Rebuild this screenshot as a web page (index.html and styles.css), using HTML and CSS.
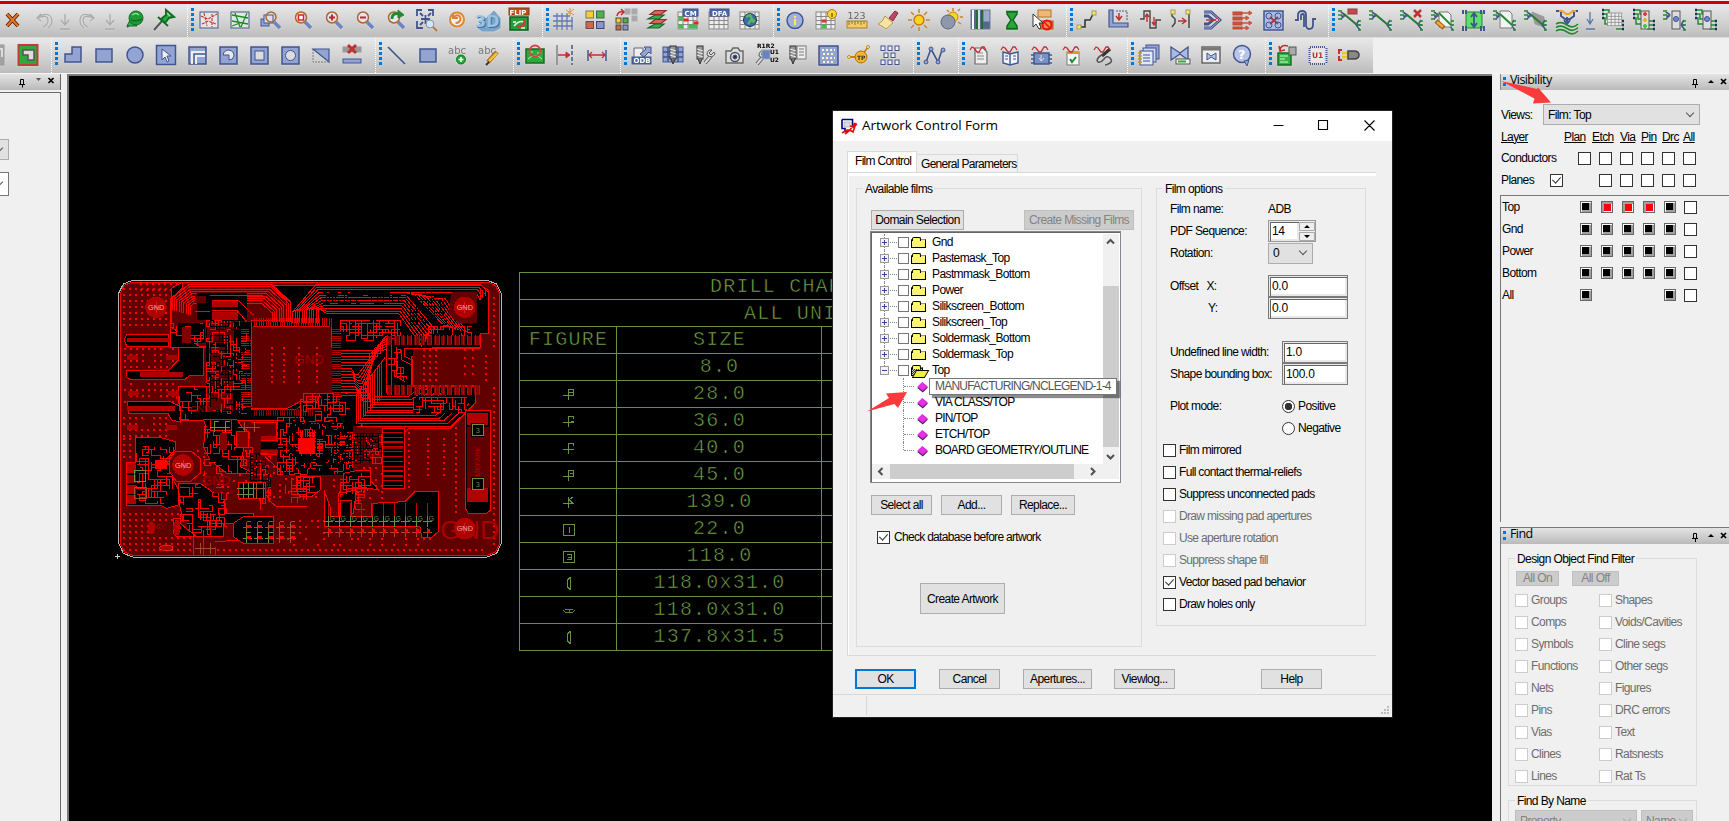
FILE: index.html
```html
<!DOCTYPE html>
<html lang="en">
<head>
<meta charset="utf-8">
<title>Artwork Control Form</title>
<link rel="stylesheet" href="styles.css">
</head>
<body>
<div class="app">
  <div class="topline"></div>
  <div class="bar" data-icons="close:23 gap:9 undo:22 down:22 redo:23 down:22 ball:28 pin:30.5 | unrats rats zfit zbox zin zout zprev zworld rotate three flip | grid colors shift layers cm dfa world | info cns measure brush sun shadow stripes hour pick | conn slide delay space fan bus spread tune | r1 r2 r3 r4 r5 r6 r7 r8 downb:15 r9 r10 r11 r12"></div>
  <div class="bar bar2" data-icons="cut:12.5 shape | poly rect circ sel lshape pie sqv cirv tri del | line rect abcadd abcedit | pcbv dimL dim | odb drillc drillt camera rename drilll matrix tp chips | netn | wdoc wbook wchip wpad wprobe | pages valve window help | swap uone plug"></div>
  <main class="main">
    <aside class="left">
      <div class="head"><svg width="60" height="16" viewBox="0 0 60 16"><path d="M20.500 5.500h3v5h-3zM19 10.500h6M22.500 10.500v3" fill="none" stroke="#000"/><path d="M36 4h5l-2.500 3z" fill="#555"/><path d="M48.500 4l5 5M53.500 4l-5 5" stroke="#000" stroke-width="1.700"/></svg></div>
      <div class="leftbody"><div class="combo c1"><span class="chev"></span></div><div class="combo c2"><span class="chev"></span></div></div>
    </aside>
    <section class="canvas">
      <svg class="pcb" viewBox="0 0 1260 930" id="pcb"></svg>
      <div class="drill">
        <div class="dr wide t1">DRILL CHART</div>
        <div class="dr wide t2">ALL UNITS</div>
        <div class="dr"><span>FIGURE</span><span>SIZE</span></div>
        <div class="dr"><span></span><span>8.0</span></div>
        <div class="dr"><span><svg viewBox="0 0 12 13"><path d="M0 7.500h11M5.500 1v11M6 1.500h4v6M6 4.500h4"/></svg></span><span>28.0</span></div>
        <div class="dr"><span><svg viewBox="0 0 12 13"><path d="M0 7.500h11M5.500 1v11M6 1.500h4v2M8 6.500h3"/></svg></span><span>36.0</span></div>
        <div class="dr"><span><svg viewBox="0 0 12 13"><path d="M0 7.500h11M5.500 1v11M6 1.500h4v2"/></svg></span><span>40.0</span></div>
        <div class="dr"><span><svg viewBox="0 0 12 13"><path d="M0 7.500h11M5.500 1v11M6 1.500h4v2M7 4.500h3v3"/></svg></span><span>45.0</span></div>
        <div class="dr"><span><svg viewBox="0 0 12 13"><path d="M0 7.500h11M5.500 1v11M10 1l-4 3 4 3"/></svg></span><span>139.0</span></div>
        <div class="dr"><span><svg viewBox="0 0 12 13"><path d="M.5 1.500h11v11H.5zM6.500 4v6"/></svg></span><span>22.0</span></div>
        <div class="dr"><span><svg viewBox="0 0 12 13"><path d="M.5 1.500h11v11H.5zM4 4.500h4v5H4M5 7h3"/></svg></span><span>118.0</span></div>
        <div class="dr"><span><svg viewBox="0 0 12 13"><path d="M7.500 0v13M7 .5L4.500 3v7L7 12.500"/></svg></span><span>118.0x31.0</span></div>
        <div class="dr"><span><svg viewBox="0 0 13 13"><path d="M2 5.500h9l1.500 1.500-1.500 1.500H2L.5 7zM6.500 6v2"/></svg></span><span>118.0x31.0</span></div>
        <div class="dr"><span><svg viewBox="0 0 12 13"><path d="M7.500 0v13M7 .5L4.500 3v7L7 12.500"/></svg></span><span>137.8x31.5</span></div>
      </div>
    </section>
    <aside class="right">
      <div class="head"><span class="ticks"></span><b>Visibility</b><svg class="hi" width="46" height="16" viewBox="0 0 46 16"><path d="M8.500 5.500h3v5h-3zM7 10.500h6M10.500 10v4" fill="none" stroke="#000"/><path d="M23 9h6l-3-3z"/><path d="M36 5l5 5M41 5l-5 5" stroke="#000" stroke-width="1.700"/></svg></div>
      <div class="views"><label>Views:</label><div class="combo big">Film: Top<span class="chev"></span></div></div>
      <div class="lyr hd"><u>Layer</u><u>Plan</u><u>Etch</u><u>Via</u><u>Pin</u><u>Drc</u><u>All</u></div>
      <div class="vrow"><span>Conductors</span><i class="cb"></i><i class="cb"></i><i class="cb"></i><i class="cb"></i><i class="cb"></i><i class="cb"></i></div>
      <div class="vrow"><span class="pl">Planes<i class="cb on"></i></span><i></i><i class="cb"></i><i class="cb"></i><i class="cb"></i><i class="cb"></i><i class="cb"></i></div>
      <div class="layers">
        <div class="vrow"><span>Top</span><i class="sw"></i><i class="sw red"></i><i class="sw red"></i><i class="sw red"></i><i class="sw"></i><i class="cb"></i></div>
        <div class="vrow"><span>Gnd</span><i class="sw"></i><i class="sw"></i><i class="sw"></i><i class="sw"></i><i class="sw"></i><i class="cb"></i></div>
        <div class="vrow"><span>Power</span><i class="sw"></i><i class="sw"></i><i class="sw"></i><i class="sw"></i><i class="sw"></i><i class="cb"></i></div>
        <div class="vrow"><span>Bottom</span><i class="sw"></i><i class="sw"></i><i class="sw"></i><i class="sw"></i><i class="sw"></i><i class="cb"></i></div>
        <div class="vrow"><span>All</span><i class="sw"></i><i></i><i></i><i></i><i class="sw"></i><i class="cb"></i></div>
      </div>
      <div class="find">
        <div class="head"><span class="ticks"></span><b>Find</b><svg class="hi" width="46" height="16" viewBox="0 0 46 16"><path d="M8.500 5.500h3v5h-3zM7 10.500h6M10.500 10v4" fill="none" stroke="#000"/><path d="M23 9h6l-3-3z"/><path d="M36 5l5 5M41 5l-5 5" stroke="#000" stroke-width="1.700"/></svg></div>
        <div class="grp ff"><span class="cap">Design Object Find Filter</span>
          <div class="ab"><button class="dis a1">All On</button><button class="dis a2">All Off</button></div>
          <div class="fgrid">
            <label><i class="cb d"></i>Groups</label><label><i class="cb d"></i>Shapes</label>
            <label><i class="cb d"></i>Comps</label><label><i class="cb d"></i>Voids/Cavities</label>
            <label><i class="cb d"></i>Symbols</label><label><i class="cb d"></i>Cline segs</label>
            <label><i class="cb d"></i>Functions</label><label><i class="cb d"></i>Other segs</label>
            <label><i class="cb d"></i>Nets</label><label><i class="cb d"></i>Figures</label>
            <label><i class="cb d"></i>Pins</label><label><i class="cb d"></i>DRC errors</label>
            <label><i class="cb d"></i>Vias</label><label><i class="cb d"></i>Text</label>
            <label><i class="cb d"></i>Clines</label><label><i class="cb d"></i>Ratsnests</label>
            <label><i class="cb d"></i>Lines</label><label><i class="cb d"></i>Rat Ts</label>
          </div>
        </div>
        <div class="grp fn"><span class="cap">Find By Name</span>
          <div class="nm"><div class="combo dc p">Property<span class="chev"></span></div><div class="combo dc n">Name<span class="chev"></span></div></div>
        </div>
      </div>
    </aside>
  </main>

  <div class="dialog">
    <header class="title">
      <svg width="17" height="17" viewBox="0 0 17 17"><path d="M1 1.500h10.500V8M1 1.500v9h3v3h3" fill="#fff" stroke="#00008b" stroke-width="1.600"/><path d="M3 4h6v5H3z" fill="#dde" stroke="#aab" stroke-width=".8"/><path d="M1 15l5-3h3l5-7M4 16l5-4 3 2 3-9M9 8l3 1 4-3" fill="none" stroke="#e01010" stroke-width="1.700"/></svg>
      <b>Artwork Control Form</b>
      <svg class="wb" width="104" height="14" viewBox="0 0 104 14"><path d="M.5 6.500h10M45.500 1.500h9v9h-9zM91.500 1.500l10 10M101.500 1.500l-10 10" fill="none" stroke="#000" stroke-width="1.100"/></svg>
    </header>
    <div class="tabs"><div class="tab act">Film Control</div><div class="tab">General Parameters</div></div>
    <div class="page">
      <div class="grp films"><span class="cap">Available films</span>
        <div class="brow"><button class="w93">Domain Selection</button><button class="dis w110">Create Missing Films</button></div>
        <div class="tree">
          <div class="items">
            <div class="it"><em></em><i></i><s></s>Gnd</div>
            <div class="it"><em></em><i></i><s></s>Pastemask_Top</div>
            <div class="it"><em></em><i></i><s></s>Pastmmask_Bottom</div>
            <div class="it"><em></em><i></i><s></s>Power</div>
            <div class="it"><em></em><i></i><s></s>Silikscreen_Bottom</div>
            <div class="it"><em></em><i></i><s></s>Silikscreen_Top</div>
            <div class="it"><em></em><i></i><s></s>Soldermask_Bottom</div>
            <div class="it"><em></em><i></i><s></s>Soldermask_Top</div>
            <div class="it open"><em class="minus"></em><i></i><s class="o"></s>Top</div>
            <div class="ch"><q></q><span class="tip">MANUFACTURING/NCLEGEND-1-4</span></div>
            <div class="ch"><q></q>VIA CLASS/TOP</div>
            <div class="ch"><q></q>PIN/TOP</div>
            <div class="ch"><q></q>ETCH/TOP</div>
            <div class="ch last"><q></q>BOARD GEOMETRY/OUTLINE</div>
          </div>
          <div class="vs"><svg width="15" height="15" viewBox="0 0 15 15"><path d="M4 9.500l3.500-3.500L11 9.500"/></svg><div class="vt"></div><svg width="15" height="15" viewBox="0 0 15 15"><path d="M4 6l3.500 3.500L11 6"/></svg></div>
          <div class="hs"><svg width="18" height="15" viewBox="0 0 18 15"><path d="M10.500 4L7 7.500l3.500 3.500"/></svg><div class="ht"></div><svg width="38" height="15" viewBox="0 0 38 15"><path d="M17 4l3.500 3.500L17 11"/></svg></div>
        </div>
        <div class="brow b2"><button class="w61">Select all</button><button class="w61">Add...</button><button class="w64">Replace...</button></div>
        <label class="chk"><i class="cb on"></i>Check database before artwork</label>
        <button class="art">Create Artwork</button>
      </div>
      <div class="grp opts"><span class="cap">Film options</span>
        <div class="or"><span>Film name:</span><span>ADB</span></div>
        <div class="or"><span>PDF Sequence:</span><div class="spin"><div class="inp">14</div><svg width="16" height="19" viewBox="0 0 16 19"><path d="M.5.500h15v8H.5zM.5 10.500h15v8H.5z" fill="#eee" stroke="#aaa"/><path d="M5 6h6L8 3zM5 13h6l-3 3z"/></svg></div></div>
        <div class="or"><span>Rotation:</span><div class="combo rot">0<span class="chev"></span></div></div>
        <div class="or g11"><span>Offset&nbsp;&nbsp; X:</span><div class="inp i80">0.0</div></div>
        <div class="or"><span class="y">Y:</span><div class="inp i80">0.0</div></div>
        <div class="or g22 r2"><span>Undefined line width:</span><div class="inp">1.0</div></div>
        <div class="or r2"><span>Shape bounding box:</span><div class="inp">100.0</div></div>
        <div class="or g10 r2"><span>Plot mode:</span><label><i class="rd on"></i>Positive</label></div>
        <div class="or r2"><span></span><label><i class="rd"></i>Negative</label></div>
        <label class="chk"><i class="cb"></i>Film mirrored</label>
        <label class="chk"><i class="cb"></i>Full contact thermal-reliefs</label>
        <label class="chk"><i class="cb"></i>Suppress unconnected pads</label>
        <label class="chk off"><i class="cb d"></i>Draw missing pad apertures</label>
        <label class="chk off"><i class="cb d"></i>Use aperture rotation</label>
        <label class="chk off"><i class="cb d"></i>Suppress shape fill</label>
        <label class="chk"><i class="cb on"></i>Vector based pad behavior</label>
        <label class="chk"><i class="cb"></i>Draw holes only</label>
      </div>
    </div>
    <div class="foot"><button class="ok w61">OK</button><button class="w61">Cancel</button><button class="w69">Apertures...</button><button class="w61">Viewlog...</button><button class="w61 help">Help</button></div>
    <div class="status"><svg width="9" height="9" viewBox="0 0 9 9"><path d="M6 0h2v2H6zM3 3h2v2H3zM6 3h2v2H6zM0 6h2v2H0zM3 6h2v2H3zM6 6h2v2H6z" fill="#bbb"/></svg></div>
  </div>
  <svg class="ar a-tree" width="41" height="23" viewBox="0 0 41 23"><path d="M0 21.500L22 8 19 3.500 40 2 31 18l-3.500-4z" fill="#fb3b3b"/></svg>
  <svg class="ar a-view" width="52" height="24" viewBox="0 0 52 24"><path d="M0 0l36 8 1-1.500L50 21.500 32 22.500l1.500-5z" fill="#fb3b3b"/></svg>
</div>
<script src="app.js"></script>
</body>
</html>
```

FILE: styles.css
```css
* { box-sizing: border-box; }
body { margin: 0; background: #f0f0f0; font: 12px/16px "Liberation Sans", Arial, sans-serif; letter-spacing: -.6px; color: #000; }
i, em { font-style: normal; }
.app { position: relative; width: 1729px; height: 821px; overflow: hidden; display: flex; flex-direction: column; }
.topline { height: 4px; flex: none; border-top: 1px solid #f0f0f0; background: #cb0000; }
.bar { height: 34px; flex: none; display: flex; background: linear-gradient(#e8e8e8, #d4d4d4 50%, #bcbcbc); border-bottom: 1px solid #dcdcdc; }
.bar2 { height: 35px; width: 1373px; border-bottom: 0; }
.bar .cell { flex: none; display: flex; justify-content: center; align-items: center; height: 32px; }
.bar2 .cell { height: 34px; }
.bar .cell svg { flex: none; width: 24px; height: 24px; overflow: visible; filter: drop-shadow(0 0 1px #ddd); }
.sep { flex: none; width: 14px; display: flex; justify-content: flex-end; gap: 3px; }
.sep::before { content: ""; border-left: 1px dotted #fff; }
.sep::after { content: ""; width: 3px; height: 24px; margin: 4px 0 0 0; background: repeating-linear-gradient(#0078d7 0 3px, transparent 3px 5px); }
.main { flex: 1; display: flex; min-height: 0; border-top: 1px solid #f6f6f6; }
.left { width: 67px; display: flex; flex-direction: column; }
.head { height: 16px; flex: none; display: flex; align-items: center; background: linear-gradient(#e4e4e4, #bababa); }
.left .head { width: 61px; border-right: 1px solid #666; }
.leftbody { flex: 1; width: 61px; margin-top: 2px; border: solid #6a6a6a; border-width: 1px 1px 0 0; display: flex; flex-direction: column; }
.combo { position: relative; display: flex; align-items: center; border: 1px solid #adadad; background: #e1e1e1; padding-left: 4px; }
.chev { position: absolute; right: 6px; top: 50%; width: 6px; height: 6px; margin-top: -5px; border: solid #555; border-width: 0 1px 1px 0; transform: rotate(45deg); }
.c1 { width: 9px; height: 21px; margin-top: 46px; }
.c2 { width: 9px; height: 24px; margin-top: 12px; background: #fff; border-color: #777; }
.c1, .c2 { border-left: 0; }
.canvas { flex: 1; position: relative; overflow: hidden; background: #000; border: solid #7a7a7a; border-width: 2px 0 0 2px; }
.pcb { position: absolute; left: 31px; top: 184px; width: 420px; height: 310px; shape-rendering: crispEdges; }
.drill { position: absolute; left: 450px; top: 196px; width: 400px; border: solid #679040; border-width: 1px 0 0 1px; font: 20px/28px "Liberation Mono", monospace; letter-spacing: 1.200px; color: #77a948; -webkit-text-stroke: .6px #000; }
.dr { height: 27px; border-bottom: 1px solid #679040; display: grid; grid-template-columns: 97px 205px 1fr; white-space: nowrap; }
.dr span { border-right: 1px solid #679040; display: flex; align-items: center; justify-content: center; height: 26px; padding-left: 1px; }
.dr svg { width: 12px; height: 13px; fill: none; stroke: #679040; shape-rendering: crispEdges; }
.t1 { padding-left: 190px; } .t2 { padding-left: 224px; }
.dr.wide { display: block; }
.right { width: 237px; padding-left: 8px; overflow: hidden; display: flex; flex-direction: column; }
.right > * { flex: none; }
.head b { font: 12.500px/16px "Open Sans", sans-serif; letter-spacing: -.6px; margin: -4px 0 0 4px; }
.ticks { width: 3px; height: 9px; margin: -2px 0 0 2px; background: linear-gradient(#0078d7 0 3px, transparent 3px 6px, #0078d7 6px 9px); }
.hi { margin-left: auto; margin-right: -2px; }
.right > .head { width: 229px; border-left: 1px solid #888; }
.views { display: flex; align-items: center; margin-top: 14px; height: 21px; padding-left: 1px; }
.big { width: 157px; height: 21px; margin-left: auto; margin-right: 29px; }
.lyr, .vrow { display: grid; align-items: center; height: 22px; padding-left: 1px; }
.lyr { grid-template-columns: 63px 28px 28px 21px 21px 21px 21px; margin-top: 1px; height: 21px; }
.vrow { grid-template-columns: 73px repeat(6, 21px); justify-items: center; height: 22px; }
.vrow > span { justify-self: start; width: 73px; }
.pl { display: flex; align-items: center; } .pl .cb { margin-left: 16px; }
.cb { width: 13px; height: 13px; flex: none; border: 1px solid #333; background: #fff; display: inline-block; position: relative; }
.cb.d { border-color: #ccc; }
.cb.on::after { content: ""; position: absolute; left: 3px; top: 0; width: 4px; height: 7px; border: solid #333; border-width: 0 1.300px 1.300px 0; transform: rotate(42deg); }
.layers { height: 327px; margin-top: 4px; border: solid #777; border-width: 1px 0 0 1px; }
.layers .vrow { grid-template-columns: 73px repeat(6, 21px); }
.sw { width: 12px; height: 12px; background: #000; border: 1px solid #666; box-shadow: inset 1px 1px #fff, inset -2px -2px #a0a0a0; }
.sw.red { background: #f00; box-shadow: inset 2px 2px #a0a0a0, inset -1px -1px #fff; }
.find { margin-top: 5px; height: 300px; border: solid #777; border-width: 1px 0 0 1px; }
.grp { position: relative; border: 1px solid #dcdcdc; }
.cap { position: absolute; left: 6px; top: -8px; padding: 0 2px; background: #f0f0f0; white-space: nowrap; }
.ff { width: 189px; height: 228px; margin: 14px 0 0 7px; color: #6d6d6d; }
.ff .cap, .fn .cap { color: #000; }
button { font: inherit; letter-spacing: inherit; color: #000; height: 20px; padding: 0; border: 1px solid #adadad; background: #e1e1e1; white-space: nowrap; }
button.dis { background: #ccc; border-color: #bfbfbf; color: #838383; }
.ab { display: flex; gap: 13px; padding: 12px 0 0 7px; }
.ab button { height: 15px; line-height: 13px; } .a1 { width: 43px; } .a2 { width: 47px; }
.fgrid { display: grid; grid-template-columns: 84px 100px; grid-auto-rows: 22px; margin: 3px 0 0 6px; }
.fgrid label, .chk, .or label { display: flex; align-items: center; gap: 3px; white-space: nowrap; }
.fn { width: 189px; height: 60px; margin: 14px 0 0 7px; }
.nm { display: flex; gap: 4px; padding: 9px 0 0 6px; }
.dc { height: 21px; background: #ccc; color: #838383; border-color: #bfbfbf; } .dc .chev { border-color: #aaa; } .p { width: 122px; } .n { width: 52px; }

.dialog { position: absolute; left: 833px; top: 111px; width: 559px; height: 606px; background: #f0f0f0; outline: 1px solid #222; display: flex; flex-direction: column; }
.title { height: 30px; flex: none; background: #fff; display: flex; align-items: center; padding-left: 8px; }
.title b { font: 13.500px/18px "Open Sans", sans-serif; letter-spacing: -.05px; margin: -2px 0 0 4px; }
.wb { margin-left: auto; margin-right: 15px; }
.tabs { display: flex; height: 31px; padding: 11px 0 0 14px; align-items: flex-end; }
.tab { height: 18px; width: 101px; border: 1px solid #d9d9d9; border-bottom: 0; border-left: 0; padding: 1px 4px; white-space: nowrap; letter-spacing: -.7px; }
.tab.act { height: 21px; width: 70px; background: #fff; border-left: 1px solid #d9d9d9; padding: 1px 7px; }
.page { width: 529px; height: 484px; margin-left: 14px; border: 1px solid #d9d9d9; border-right: 0; box-shadow: inset 1px 3px #fff; display: flex; padding: 15px 0 0 8px; gap: 14px; }
.films { width: 286px; height: 459px; padding: 21px 0 0 14px; }
.brow { display: flex; gap: 9px; }
.w93 { width: 93px; } .w110 { width: 110px; margin-left: 51px; } .w61 { width: 61px; } .w64 { width: 64px; } .w69 { width: 69px; }
.tree { width: 251px; height: 252px; margin: 1px 0 0 -1px; background: #fff; border: 1px solid #828790; box-shadow: inset 1px 1px #666; display: grid; grid-template: 230px 15px / 231px 16px; padding: 2px 0 0 1px; }
.items { position: relative; }
.it, .ch { height: 16px; display: flex; align-items: center; white-space: nowrap; }
.it { padding-left: 8px; position: relative; }
.it::before { content: ""; position: absolute; left: 12px; top: 0; height: 16px; border-left: 1px dotted #888; }
.it.open::before { height: 8px; }
.it em { width: 9px; height: 9px; position: relative; border: 1px solid #999; background: linear-gradient(#2b4b9b, #2b4b9b) center/5px 1px no-repeat, linear-gradient(#2b4b9b, #2b4b9b) center/1px 5px no-repeat, #f4f4f4; }
.it em.minus { background: linear-gradient(#2b4b9b, #2b4b9b) center/5px 1px no-repeat, #f4f4f4; }
.it em::after { content: ""; position: absolute; left: 9px; top: 3px; width: 7px; border-top: 1px dotted #888; }
.it i { width: 11px; height: 11px; border: 1px solid #777; margin-left: 9px; background: #fff; }
.it s { width: 15px; height: 9px; margin: 2px 6px 0 2px; background: repeating-conic-gradient(#ffff28 0 25%, #fff47e 0 50%) 0 0/2px 2px; border: 1px solid #000; border-top-color: #aa0; position: relative; text-decoration: none; }
.it s::before { content: ""; position: absolute; left: 0; top: -3px; width: 7px; height: 3px; border: 1px solid #000; border-bottom: 0; border-radius: 2px 2px 0 0; background: #ff5; }
.it s.o { width: 12px; margin-right: 9px; background: repeating-conic-gradient(#333 0 25%, #ccc 0 50%) 0 0/2px 2px; }
.it s.o::after { content: ""; position: absolute; left: 2px; top: 2px; width: 11px; height: 6px; background: #ee4; border: 1px solid #000; transform: skewX(-30deg); }
.ch { padding-left: 47px; position: relative; }
.ch::before { content: ""; position: absolute; left: 31px; top: 0; height: 16px; border-left: 1px dotted #888; }
.ch.last::before { height: 8px; }
.ch::after { content: ""; position: absolute; left: 32px; top: 8px; width: 10px; border-top: 1px dotted #888; }
.ch q { quotes: none; width: 7px; height: 7px; margin-right: 9px; background: #e62ee6; box-shadow: 1px 1px #402040; transform: rotate(38deg) skew(-8deg); }
.ch { letter-spacing: -.75px; }
.tip { position: absolute; left: 57px; top: 0; z-index: 3; width: 188px; height: 17px; line-height: 15px; padding-left: 5px; background: #fff; border: 1px solid #767676; color: #555; box-shadow: 3px 3px 1px rgba(0,0,0,.45); letter-spacing: -.78px; }
.vs, .hs { background: #f0f0f0; display: flex; }
.vs { flex-direction: column; }
.vs svg, .hs svg { fill: none; stroke: #505050; stroke-width: 2; }
.vt { height: 161px; margin: 37px 0 2px; background: #cdcdcd; }
.hs { grid-column: 1 / 3; } .ht { width: 184px; background: #cdcdcd; }
.b2 { margin-top: 12px; }
.chk { height: 22px; }
.films .chk { margin: 11px 0 0 6px; gap: 4px; letter-spacing: -.7px; }
.art { width: 85px; height: 31px; margin: 35px 0 0 49px; }
.opts { width: 210px; height: 438px; padding: 9px 0 0 6px; }
.opts .chk.off { color: #6d6d6d; }
.opts .chk { letter-spacing: -.66px; }
.or { display: grid; grid-template-columns: 98px auto; height: 22px; align-items: center; justify-content: start; padding-left: 7px; white-space: nowrap; }
.or.r2 { grid-template-columns: 112px 66px; }
.g11 { margin-top: 11px; } .g22 { margin-top: 22px; } .g10 { margin-top: 10px; }
.y { padding-left: 38px; }
.inp { height: 22px; border: 1px solid #7a7a7a; background: #fff; box-shadow: inset 1px 1px #e8e8e8, inset 2px 2px #666, inset -2px -2px #e8e8e8; padding: 2px 0 0 3px; letter-spacing: -.3px; }
.i80 { width: 80px; }
.spin { display: flex; align-items: center; width: 48px; height: 22px; border: 1px solid #999; }
.spin .inp { width: 30px; height: 20px; border: 0; padding-left: 3px; padding-top: 2px; }
.rot { width: 45px; height: 21px; }
.rd { width: 13px; height: 13px; border: 1px solid #333; border-radius: 50%; background: #fff; }
.rd.on { background: radial-gradient(#333 0 3.500px, #fff 4px); }
.foot { display: flex; gap: 23px; padding: 13px 0 0 22px; }
.ok { border: 2px solid #0078d7; }
.foot .help { margin-left: 63px; }
.foot button:nth-child(4) { margin-left: -1px; }
.status { margin-top: auto; height: 23px; border-top: 1px solid #d7d7d7; display: flex; justify-content: flex-end; align-items: flex-end; padding: 2px; }
.status::before { content: ""; width: 1px; height: 19px; background: #d7d7d7; margin-left: 31px; margin-right: auto; }
.ar { position: absolute; }
.a-tree { left: 867px; top: 390px; }
.a-view { left: 1501px; top: 81px; }
```

FILE: app.js
```js
// ---- Toolbar icons, drawn in a 24 x 24 box ----
const B = '#93a3d3', S = '#40558c', G = '#1f8a2e', R = '#c22f2f';
const p = (d, s = S, w = 1.5, f = 'none') => `<path d="${d}" stroke="${s}" stroke-width="${w}" fill="${f}"/>`;
const r = (x, y, w, h, f = B, s = S, sw = 1) => `<rect x="${x}" y="${y}" width="${w}" height="${h}" fill="${f}" stroke="${s}" stroke-width="${sw}"/>`;
const c = (x, y, q, f = B, s = S, sw = 1) => `<circle cx="${x}" cy="${y}" r="${q}" fill="${f}" stroke="${s}" stroke-width="${sw}"/>`;
const t = (x, y, s, z, f, b = 400) => `<text x="${x}" y="${y}" font-size="${z}" fill="${f}" font-weight="${b}" font-family="DejaVu Sans" letter-spacing="0">${s}</text>`;
const mag = p('M15 14l6 6', '#6d83c4', 3.6) + c(11, 9.500, 5.500, '#e3e6ee', '#a8672c', 1.500);
const table = r(2, 4, 19, 17, '#eee', '#888') + p('M2 8.500h19M2 12.500h19M2 16.500h19M7 4v17M12 4v17M17 4v17', '#888', 1);
const wave = p('M2 7l2-3 2 1 3 4 2 0 3-5 2 0 2 3', R, 1.300);
const pin4 = p('M3 4l4 3M3 8h4M3 11l4-4M22 22l-4-5M22 17h-4M21 12l-3 5', S, 1.600) + p('M0 3h4M0 7h4M0 11h4M20 13h3M20 17h3M20 22h3', G, 1.500);
const diag = pin4 + p('M6 6l13 11', '#2b7a35', 2.2);
const drill = r(5, 3, 6, 13, '#999', '#333') + p('M5 6l6 2M5 9l6 2M5 12l6 2', '#eee', 1) + p('M6 16l2 5 2-5', '#333', 1, '#777');
const wrench = p('M13 20l6-7', '#555', 4) + p('M13 20l6-7', '#ddd', 2) + p('M22 9l-3 3-2-2 3-3q-5-1-5 5 5 4 8-1z', '#555', 1, '#ddd');
const pcb = r(3, 6, 18, 14, '#2eaa3c', '#176b20', 1.500) + p('M5 16l4-3h6l4 3M6 9h4M14 10h4', '#bdf2a9', 1);
const ch4 = p('M2 2h6v4h3M2 6h4v5h5M2 10h2v6h7', G, 1.500) + p('M15 13h7M15 17h7M15 21h7', G, 1.500) + p('M1 2h2M1 6h2M1 10h2M21 13h2M21 17h2M21 21h2', '#135', 2.500);
const bolt = r(9, 3, 8, 18, '#ddd', '#555');
const I = {
  gap: '', close: p('M7 6l11 12M18 6L7 18', '#5a2208', 4) + p('M7 6l11 12M18 6L7 18', '#e2742a', 2.2),
  undo: p('M10 6l-4 4 4 3M6 10q11-4 11 2 0 5-5 7M8 8q12-5 13 5 0 4-4 7', '#aaa', 1.200), redo: p('M14 6l4 4-4 3M18 10Q7 6 7 12q0 5 5 7M16 8Q4 3 4 13q0 4 4 7', '#aaa', 1.200),
  down: p('M12 6v10M8 12l4 5 4-5M7 21h10', '#aaa', 1.300), downb: p('M12 4v11M9 11l3 5 3-5M8 21h9', '#5874a8', 1.300),
  ball: p('M4 19l6-5', '#444', 2) + p('M4 18l4-8 6 8z', '#0c6a20', 1, '#3aa850') + c(13, 10, 7, '#1e9a36', '#0c6a20') + p('M9 7q4-3 7 0', '#8ae08c', 1.500) + p('M8 12q6 2 11-1', '#0c6a20', 1.300),
  pin: p('M2 22l8-9', '#555', 2) + p('M6 9l10 9M14 2l8 7-5 1-4 5-4-4 5-4z', '#0e7024', 2, '#2cab43') + p('M15 5l3 3', '#9be8a0', 1.300),
  unrats: r(3, 4, 18, 16, '#e8e4e4') + p('M4 8l7 3 9-5M7 5l3 13M15 6v13M5 16l6-3 8 3', R, 1.100).replace('/>', ' stroke-dasharray="3 1"/>'),
  rats: r(3, 4, 18, 16, '#e2e8e0') + p('M4 7l16 3M7 5l5 14M19 5l-6 14M4 13l16 3M4 18l8-3', G, 1.300),
  zfit: r(2, 11, 8, 7) + r(5, 7, 9, 8, '#dde') + p('M15 14l6 6', '#6d83c4', 3.600) + c(12, 9, 5, 'none', '#a8672c', 1.500), zbox: mag + r(8.500, 7, 5, 5, '#fff', '#d22', 1.500), zin: mag + p('M11 6.500v6M8 9.500h6', '#c22', 2), zout: mag + p('M8 9.500h6', '#c22', 2),
  zprev: mag + p('M9 11q0-7 8-5', G, 2.800) + p('M15 2l6 5-6 3z', G, 1, G), zworld: p('M3 8V2h5M14 2h5v6M3 13v7h6M7 11h9M11.500 7v9M6 5l3 3M17 5l-3 3M6 17l3-3', S, 1.800) + c(16, 16, 4, '#cde8fa', '#88a') + p('M19 19l4 4', '#b87838', 2),
  rotate: c(12, 11.500, 7, '#f2ede5', '#d98a35', 2) + p('M8.500 9q5-4 7 1 0 5-5 5M8 5v5h5', '#e08130', 2),
  three: p('M18 3l6 7v10l-6 3H6l-5-4z', '#78a4cb', 1, '#78a4cb') + t(0, 20, '3D', 16, '#3f6f9f', 700) + t(-1, 19, '3D', 16, '#9cc2e0', 700),
  flip: r(3, 9, 18, 13, '#289c38', '#125b1b', 1.500) + p('M7 18q5-6 10-4M6 14h3M14 20h4', '#efe', 1.300) + p('M17 12q2 7-7 7', '#d33', 2) + r(2, 0, 20, 7, '#b85218', '#8a3a0c') + t(2.500, 6.500, 'FLIP', 7, '#fff', 700),
  grid: p('M5 5v17M10 5v17M15 5v17M20 9v13M1 8h17M1 13h20M1 18h20', '#6378b8', 1.300) + p('M18 0v8M14 2l8 5M22 1l-8 6', '#d9963c', 1),
  colors: r(3, 3, 7.500, 7, '#f5cf2c', '#776') + r(13.500, 3, 7.500, 7, '#50b04c', '#464') + r(3, 13.500, 7.500, 7, '#c8694a', '#744') + r(13.500, 13.500, 7.500, 7, '#8496cc', '#446'),
  shift: r(11, 1, 5, 5, '#aaa', '#aaa') + r(18, 1, 5, 5, '#aaa', '#aaa') + r(18, 8, 5, 5, '#aaa', '#aaa') + r(2, 10, 5, 5, '#f5cf2c', '#444') + r(9, 10, 5, 5, '#50b04c', '#444') + r(2, 17, 5, 5, '#c8694a', '#444') + r(9, 17, 5, 5, '#8496cc', '#444') + p('M3 8q1-5 6-4M7 1l3 3-3 3', R, 1.500),
  layers: p('M3 20h11l5-4h-9zM3 11h11l5-4h-9z', '#14662a', 1.200, '#39ad50') + p('M5 15.500h11l5-4H10zM5 6.500h11l5-4H10z', '#8b3030', 1.200, '#d86555'),
  cm: table + r(3, 9, 4, 3, '#4b5', '#4b5') + r(8, 11, 4, 2, '#e22', '#e22') + r(18, 14, 4, 2, '#e22', '#e22') + r(3, 17, 4, 3, '#4b5', '#4b5') + r(13, 17, 8, 3, '#4b5', '#4b5') + r(7, 1, 15, 7, '#4b67ab') + t(8.500, 7.500, 'CM', 7, '#fff', 700), dfa: table + r(3, 1, 19, 7, '#4b67ab') + t(5, 7.500, 'DFA', 7, '#fff', 700),
  world: table + c(12, 12, 6.500, '#3d6cae', '#234') + p('M8 9l4-2 2 4-4 5M14 14l3-2', '#55bb55', 2.500),
  info: c(12, 12.500, 8, '#9fb0df', S, 1.500) + p('M12 11v6M12 8v2', '#ffe94a', 2.200), cns: table + r(8, 12, 4, 2, '#d33', '#d33') + r(8, 17, 4, 3, '#4b5', '#4b5') + c(18, 6, 4.500, '#ffd52b', '#a77a10') + p('M18 5v4', '#663', 1.500),
  measure: t(2.500, 10.500, '123', 9.500, '#666') + r(2, 13, 20, 7, '#f3cc65', '#b07b18') + p('M4 13v4M7 13v3M10 13v4M13 13v3M16 13v4M19 13v3', '#775', 1),
  brush: p('M13 10l6-7 3 2-5 8z', '#8c2540', 1, '#bb4762') + p('M9 8l8 7-7 6q-2-2-8-5 5-2 7-8z', '#b5974a', 1, '#f6e5a0'),
  sun: c(12, 12, 5, '#ffd21f', '#c67a14', 1.500) + p('M12 1v4M12 19v4M1 12h4M19 12h4M4 4l3 3M17 17l3 3M20 4l-3 3M7 17l-3 3', '#c8832b', 1.500),
  shadow: c(15, 9, 5, '#ffd21f', '#c67a14') + p('M15 0v3M22 9h3M20 3l2-2M20 14l3 2M9 2l2 2', '#c8832b', 1.500) + c(10, 14, 7, '#8f97ab', '#5a627a'),
  stripes: r(2, 2, 19, 19, '#55698f', '#6c7890') + p('M4 2v19', '#fff', 2) + p('M8 2v19M13 2v19', '#286b38', 2) + p('M10 2v19', '#fff', 1.500) + r(15, 3, 5, 10, '#9cabc8', '#9cabc8'),
  hour: p('M7 4h10v2l-4 6 4 6v3H7v-3l4-6-4-6zM6 3.500h12M6 20.500h12', '#0d6f1d', 1.500, '#2ca53c'),
  pick: r(7, 2, 13, 7, '#eeb977', '#b8702a') + r(9, 13, 13, 8, '#e58c47', '#a8541f') + c(16, 17, 4.500, 'none', '#e11', 2) + p('M13 14l6 6', '#e11', 1.500) + p('M2 6v13l3-3 3 5 2-1-2-5h4z', '#333', 1, '#fff'),
  conn: p('M5 19h4v-7h5l3-6', '#333', 1.600) + r(1, 17, 4, 4, '#ffec3d', '#997') + r(16, 3, 4, 4, '#ffec3d', '#997'),
  slide: p('M2 2v17h19v-4H6V2z', S, 1.200, B) + p('M9 3h11v10', S, 1).replace('/>', ' stroke-dasharray="2 1"/>') + p('M12 5v6M9 8l3 4 3-4', R, 1.500),
  delay: p('M2 11h4V3h6v17h6v-8h5', '#444', 1.400) + p('M9 14V7M7 9l2-3 2 3M16 9v7M14 14l2 3 2-3', R, 1.400),
  space: p('M3 4v4l3 3v4l-3 4M20 4v16', '#444', 1.500) + p('M9 13h7M13 10l4 3-4 3', R, 1.500) + r(2, 2, 4, 4, '#ffec3d', '#997') + r(17, 2, 4, 4, '#ffec3d', '#997'),
  fan: p('M4 4h7l9 8-9 8H4M4 8h4l5 4-5 4H4', S, 2.800) + p('M4 4h7l9 8-9 8H4', B, 1) + p('M6 12h9', R, 1.500) + c(17, 12, 1.500, '#fff', R),
  bus: r(2, 4, 9, 3, '#c85540', '#b54835') + r(2, 9, 9, 3, '#c85540', '#b54835') + r(2, 14, 9, 3, '#c85540', '#b54835') + r(2, 19, 9, 2, '#c85540', '#b54835') + p('M11 5h8M11 10h5M11 15h8M11 20h5', '#c85540', 1.300) + p('M18 3l3 2-3 2zM15 8l3 2-3 2zM18 13l3 2-3 2zM15 18l3 2-3 2z', '#c85540', 1, '#c85540'),
  spread: r(2, 3, 19, 19, '#a9bbe5', S, 1.500) + p('M8 9l8 7M16 9l-8 7', R, 1.800) + c(7, 8, 3, 'none') + c(16, 8, 3, 'none') + c(7, 17, 3, 'none') + c(16, 17, 3, 'none'),
  tune: p('M2 12h3V6q1-3 4-3 4 0 4 4v11q1 3 3 3 4 0 4-4v-6h3M5 12M8 12V7q2-2 3 0v12', S, 1.800),
  r1: diag + r(10, 1, 9, 5, '#c14a4a', '#844'), r2: diag, r3: diag + p('M14 2l7 7M21 2l-7 7', R, 2.500), r4: diag + p('M8 4h9l3 3v12H8z', '#777', 1, '#f3f3f3') + p('M8 5l12 12', G, 1.800) + p('M5 13l8 7', '#9a5f14', 4.500) + p('M6 14l6 5', '#f0ac3f', 2.500),
  r5: r(4, 4, 16, 16, '#62dc6c', G) + p('M1 2v4M4 2v4M19 2v4M22 2v4M1 18v5M4 18v5M19 18v5M22 18v5', S, 2) + p('M12 6v12M9 9l3-4 3 4M9 15l3 4 3-4', S, 1.800),
  r6: diag + p('M7 3h9l3 3v14H7z', '#777', 1, '#f3f3f3') + p('M7 6l12 11', G, 2), r7: p('M8 4l12 5v10l-9-3z', '#999', 1, '#999') + diag,
  r8: p('M1 3h5M18 3h5M6 4v4l4 3h5l4-3V4', S, 2) + p('M4 3h3l4 3h3l4-3h3', '#f2a322', 2) + p('M12 9v5M9 12l3 4 3-4', S, 2) + p('M1 16q5-3 11 1t11-1M1 19.500q5-3 11 1t11-1M1 23q5-3 11 1t11-1', G, 1.700),
  r9: ch4 + `<g transform="translate(5 2) scale(.75)">${table}</g>`, r10: ch4 + bolt + c(13, 6, 1.500, '#e33', '#e33') + c(13, 12, 1.500, '#ea2', '#ea2') + c(13, 18, 1.500, '#3c3', '#3c3'),
  r11: pin4 + bolt + c(13, 11, 2.500, '#6a8ad0'), r12: ch4 + bolt + c(13, 11, 2.500, '#6a8ad0'),
  cut: r(-8, 2, 18, 20, '#a2a2a2', '#999') + p('M0 6h8v8', '#ddd', 2), shape: r(2.500, 2, 19, 20, '#31a83c', '#c33b3b', 2) + p('M7 7h11v10h-6v-5H7z', '#555', 1.500, '#ddd'),
  poly: p('M4 11h7V4h9v15H4z', S, 1.500, B), rect: r(4, 6, 16, 13, B, S, 1.500), circ: c(12, 12, 8, B, S, 1.500),
  sel: r(2.500, 2.500, 19, 19, B, S, 1.500) + p('M8 6v11l3-3 2 5 2-1-2-5h4z', S, 1, '#eee'), lshape: r(4, 4, 17, 17, B, S, 1.500) + p('M7 21V9h13M11 21v-8h9', '#eee', 2) + p('M9 21V11h11', S, 1),
  pie: r(4, 4, 17, 17, B, S, 1.500) + p('M7 12q1-5 6-5 5 1 5 6-1 4-5 4v-5z', S, 1, '#e8e8ee'), sqv: r(4, 4, 17, 17, B, S, 1.500) + r(8, 8, 9, 9, '#ddd'), cirv: r(4, 4, 17, 17, B, S, 1.500) + c(12.500, 12.500, 5, '#ddd'),
  tri: p('M4 6h16v13z', S, 1.200, B) + p('M4 6v13h16', '#777', 1).replace('/>', ' stroke-dasharray="2 1"/>'), del: r(3, 4, 18, 5, '#999', '#999') + p('M8 2l8 8M16 2l-8 8', R, 3) + r(3, 16, 18, 4, B, S),
  line: p('M3 4l17 17', S, 1.700), abcadd: t(1, 11, 'abc', 10, '#777') + c(14, 16.500, 4.500, '#27a534', '#147020') + p('M14 14v5M11.500 16.500h5', '#fff', 1.500), abcedit: t(0, 11, 'abc', 10, '#777') + p('M10 19L19 9', '#a56a12', 4.500) + p('M11 18l8-8', '#f5c13c', 2.500) + p('M8 22l3-3', '#333', 2),
  pcbv: pcb + c(12, 8, 5.500, 'none', '#d64545', 1.800), dimL: p('M3 2v20', '#777', 1.300) + p('M4 12h11', R, 1.500) + p('M12 9l4 3-4 3z', R, 1, R) + p('M18 2v20', S, 1.500).replace('/>', ' stroke-dasharray="4 2"/>'), dim: p('M3 7v11M21 7v11', S, 1.500) + p('M4 12h16M7 9l-3 3 3 3M17 9l3 3-3 3', R, 1.300),
  odb: p('M4 5h9v13H4z', '#667', 1, '#eee') + p('M10 11l6-5-2-2h7v7l-2-2-5 5z', S, 1, B) + r(2, 14, 19, 7, '#4967aa') + t(3.500, 20, 'ODB', 7, '#fff', 700),
  drillc: r(2, 4, 20, 15) + p('M2 9h20M2 14h20M7 4v15M17 4v15') + `<g transform="translate(4 0)">${drill}</g>`, drillt: drill + wrench, drilll: drill + r(12, 3, 9, 13, '#eee', '#777') + p('M14 6h5M14 9h5M14 12h5', '#777', 1),
  camera: p('M3 8h5l2-3h5l2 3h3v12H3z', '#666', 1.400, '#ddd') + c(12, 14, 4.500, '#dfe6f2', '#555', 1.500) + c(12, 14, 2, '#334'),
  rename: `<g transform="translate(-10 1)">${wrench}</g>` + r(8, 7, 8, 9, '#6c82bd', '#9ab') + t(3, 4.500, 'R1R2', 6, '#000', 700) + t(16, 11, 'U1', 6, '#000', 700) + t(16, 19, 'U2', 6, '#000', 700),
  matrix: r(3, 3, 19, 19, B, S, 1.500) + p('M6 7h13M7 11h11M6 15h13M7 19h11', '#fff4c6', 2).replace('/>', ' stroke-dasharray="2 2"/>'), tp: p('M1 14h8M16 11l5-7', '#c58215', 1.800) + c(2, 14, 1.500, '#eee', '#c58215') + c(21, 4, 1.500, '#eee', '#c58215') + c(14, 14, 6, '#f5b42a', '#a96b0c') + t(10, 17, 'TP', 6, '#333', 700),
  chips: [[3, 3], [10, 3], [17, 3], [6, 10], [13, 10], [3, 17], [10, 17], [17, 17]].map(a => r(a[0], a[1], 4, 4.500, '#eef')).join(''),
  netn: p('M3 19L8 6l7 13 4-12', S, 1.600) + c(3, 19, 2) + c(8, 6, 2) + c(15, 19, 2) + c(20, 7, 2),
  wdoc: p('M7 5h8l4 4v12H7z', '#666', 1.200, '#eee') + p('M9 10h6M9 13h7M9 16h7', '#888', 1) + wave, wbook: p('M4 9l7 2 8-2v11l-8 2-7-2zM11 11v10', S, 1.400, '#f2f5fc') + p('M6 13h3M6 16h3M14 13h3M14 16h3', S, 1) + wave,
  wchip: p('M4 10h15v11H4zM1 12h3M1 16h3M1 20h3M19 12h3M19 16h3M19 20h3', S, 1.500, '#7890c4') + p('M11 12v6M9 15l2.500 3 2.500-3', '#dde', 1) + wave, wpad: r(6, 9, 12, 13, '#f5f5f5', '#777') + p('M6 9.500h12', '#d5a21a', 3) + p('M9 16l2 3 4-5', G, 2) + wave,
  wprobe: p('M10 13l8-7', '#333', 3) + p('M11 11q-8 5-5 8 3 1 6-3t6-1 0 5-5 2', '#555', 1.600) + wave,
  pages: r(9, 2, 13, 14) + r(6, 5, 13, 14, '#cdd6ee') + r(3, 8, 13, 14, '#e2e8f6') + p('M6 12h7M6 15h7M6 18h7', S, 1) + p('M1 10h4M1 13h4M1 16h4M1 19h4', '#c99c13', 1.500), valve: p('M3 4l9 6 8-6v13l-8-6-9 6z', S, 1.300, '#a9bbe5') + r(8, 16, 14, 5, '#eee', '#555') + p('M10 18.500h8', '#38ad42', 2),
  window: r(3, 4, 18, 16, '#eee', '#666', 1.500) + p('M3 6h18', '#777', 3) + p('M8 10l4 3 5-3v7l-5-3-4 3z', S, 1, '#b4c3e8'), help: c(12, 11, 8.500, '#b7c4e8', S, 1.500) + p('M14 18l3 5 2-6z', S, 1, B) + t(8, 16, '?', 13, '#fff', 700),
  swap: r(3, 10, 13, 12, '#36b544', '#176b20', 1.500) + p('M5 13h8M5 16h5M5 19h8', '#cfc', 1) + p('M5 7q1-6 8-4M4 3l1 5 5-1', R, 1.500) + r(14, 4, 7, 8, '#aaa', '#555'),
  uone: r(4, 5, 15, 15, '#e8e8e8', '#ddd') + p('M4 4h16M4 21h16', S, 2).replace('/>', ' stroke-dasharray="1 1"/>') + p('M3.500 5v15M20.500 5v15', S, 2).replace('/>', ' stroke-dasharray="1 1"/>') + t(6, 15, 'U1', 7.500, R, 700),
  plug: p('M5 7H2v4M2 13v4h3', R, 2) + p('M5 10h6M5 14h6', '#eac91d', 2.500) + p('M11 8h6q5 0 5 4t-5 4h-6z', '#444', 1.500, '#888')
};
document.querySelectorAll('.bar').forEach(bar => {
  bar.innerHTML = bar.dataset.icons.split(' ').map(k => {
    if (k === '|') return '<span class="sep"></span>';
    const [n, w = 31] = k.split(':');
    return `<span class="cell" style="width:${w}px"><svg viewBox="0 0 24 24" fill="none">${I[n]}</svg></span>`;
  }).join('');
});

// ---- Board artwork ----
let seed = 11;
const rnd = () => (seed = (seed * 16807) % 2147483647) / 2147483647;
const o = [];
const P = (d, s = '#f00', w = 3, f = 'none') => o.push(`<path d="${d}" stroke="${s}" stroke-width="${w}" fill="${f}"/>`);
const Q = (x, y, w, h, f) => o.push(`<rect x="${x}" y="${y}" width="${w}" height="${h}" fill="${f}"/>`);
const T = (x, y, s, z, f) => o.push(`<text x="${x}" y="${y}" font-size="${z}" fill="${f}" font-family="Liberation Sans" letter-spacing="0">${s}</text>`);
const area = d => P(d, '#f00', 3, '#000');
function dots(x, y, w, h, keep = 1, st = 18) {
  let d = '';
  for (let a = x; a < x + w; a += st) for (let b = y; b < y + h; b += st) if (rnd() < keep) d += `M${a} ${b}h6v6h-6z`;
  P(d, 'none', 0, '#f00');
}
function noise(x, y, w, h, n, col = '#f00') {
  let d = '';
  for (let i = 0; i < n * .42; i++) {
    let a = x + Math.floor(rnd() * w / 9) * 9, b = y + Math.floor(rnd() * h / 9) * 9;
    d += `M${a} ${b}`;
    const flip = i % 2;
    for (let k = 0; k < 3; k++) {
      const s = (rnd() < .5 ? -1 : 1) * (9 + Math.floor(rnd() * 3) * 9);
      if ((k + flip) % 2) a = Math.min(x + w, Math.max(x, a + s)); else b = Math.min(y + h, Math.max(y, b + s));
      d += `L${a} ${b}`;
    }
  }
  P(d, col, 3);
}
P('M98 61H1162L1190 72 1204 100V850L1190 880 1162 891H98L70 880 56 850V100L70 72z', '#b4b4b4', 3);
P('M98 66H1162L1186 76 1199 100V850L1186 876 1162 886H98L72 876 61 850V100L72 76z', '#f00', 3, '#600000');
dots(68, 84, 140, 120); dots(120, 70, 120, 30); dots(72, 264, 160, 60, .9); dots(72, 370, 160, 60, .8); dots(70, 470, 130, 60, .8);
dots(68, 535, 30, 60); dots(70, 758, 200, 110); dots(1178, 110, 12, 740); dots(350, 866, 810, 12); dots(560, 780, 110, 80, .5); dots(1065, 500, 12, 260);
dots(980, 535, 12, 120); dots(1030, 535, 12, 120); dots(925, 515, 12, 180); dots(290, 570, 230, 150, .35); dots(500, 600, 160, 120, .4); dots(680, 620, 180, 100, .4); dots(680, 835, 320, 20, .4);
area('M248 66V84L212 116V200L300 260H455V180H560V120L515 75H1140L1165 90V220H1140V262H1000L935 290V380H1125V430L1052 500H790L770 480H700V440L660 400 600 440V480H240L205 465 236 430V380H320V262H210V190H215V84z');
Q(318, 185, 135, 280, '#000'); Q(322, 180, 80, 70, '#600000'); Q(330, 330, 70, 46, '#600000'); Q(318, 400, 80, 56, '#600000'); Q(326, 262, 50, 60, '#600000');
area('M80 224H205V258H80L72 240zM80 332H205L235 300V262H310V346H270L255 358H90L80 350zM82 424H210L240 440V486L215 480 205 460H85z');
P('M80 240H210M120 343H250M82 445H225', '#b00000', 14);
for (let i = 0; i < 9; i++) P(`M${216 + 7 * i} ${150 + 2 * i}V${114 + 3 * i}L${268 + 2 * i} ${73 + 7 * i}H${516 - 4 * i}L${572 - 7 * i} ${126 + 4 * i}V186`);
Q(290, 100, 150, 80, '#000'); Q(335, 121, 80, 20, '#b00000'); Q(335, 157, 80, 22, '#b00000'); Q(285, 108, 34, 20, '#600000'); P('M335 121H415L460 165M335 150H410L440 185M285 155H330M330 105H490');
for (let i = 0; i < 12; i++) P(`M${578 + 7 * i} 190V${156 - i}L${648 + 3 * i} ${73 + 8 * i}H${i < 4 ? 1140 - 4 * i : 930 - i * 3}${i < 4 ? `L${1164 - 8 * i} ${96 + 8 * i}V${i ? 90 : 220}` : `L${1020 - i * 5} ${170 + i * 8}V222`}`);
for (let i = 0; i < 9; i++) P(`M${920 + 12 * i} ${100 + 2 * i}l20 0L${1035 + i * 8} ${200 + i * 2}`);
noise(670, 96, 250, 34, 90, '#000'); noise(720, 180, 180, 60, 110); noise(930, 95, 110, 110, 60, '#000'); noise(985, 200, 130, 25, 30);
Q(455, 200, 240, 245, '#600000'); P('M460 200H690M455 205V440M695 200V260');
area('M455 446L560 446 600 425 650 425 660 400 700 400V480H600V440L590 448H455z');
const comb = (x, y, n, dx, dy, w, h, col = '#c80000') => { for (let i = 0; i < n; i++) Q(x + i * dx, y + i * dy, w, h, col); };
comb(462, 174, 34, 7, 0, 3, 26); comb(462, 446, 26, 7, 0, 3, 22, '#900000'); comb(424, 206, 34, 0, 7, 28, 3); comb(697, 206, 32, 0, 7, 26, 3, '#b00000');
[512, 548, 594, 647].forEach(x => dots(x, 262, 4, 105, 1, 17));
// fan-out between the main chip and the memory connector
P('M724 262H858V400L780 498H720z', 'none', 0, '#000');
for (let i = 0; i < 16; i++) P(`M722 ${272 + 9 * i}H${i < 4 ? 770 : 742 + 2 * i}${i < 6 ? `H${848 - 8 * i}V${240 + 8 * i}L860 ${228 + 8 * i}` : `L${766 + 3 * (i - 6)} ${290 + 9 * i}H${774 + 4 * (i - 6)}L${846 - 5 * (i - 6)} ${244 + 11 * (i - 6)}`}`);
for (let i = 0; i < 12; i++) P(`M${768 + 7 * i} ${492 - 7 * i}V${405 - 9 * i}L${778 + 7 * i} ${392 - 9 * i}`);
for (let i = 0; i < 12; i++) P(`M${770 + 5 * i} ${498 - 8 * i}H${1055 - 12 * i}L${1122 - 14 * i} ${435 - 5 * i}`);
Q(862, 240, 70, 135, '#000'); noise(864, 250, 62, 110, 18); P('M860 235V400M875 250V375M890 262V350L915 365M905 270V300L935 315');
Q(938, 264, 255, 112, '#600000'); P('M938 376V300L915 290 912 264H1140M938 376H1135'); dots(970, 268, 40, 100); dots(1092, 268, 32, 90, .8, 24); dots(1156, 285, 10, 80);
comb(862, 228, 14, 20, 0, 14, 28, '#800000'); comb(862, 376, 14, 20, 0, 14, 28, '#900000'); comb(860, 226, 24, 12, 0, 3, 30); comb(860, 376, 24, 12, 0, 3, 30);
Q(940, 408, 160, 52, '#000'); noise(940, 412, 160, 45, 60);
Q(235, 190, 80, 60, '#000'); noise(210, 190, 100, 60, 25); noise(320, 180, 120, 280, 190); noise(330, 180, 120, 280, 150, '#000'); noise(230, 380, 90, 100, 35); Q(246, 200, 28, 50, '#800000');
Q(530, 470, 230, 175, '#000'); noise(532, 472, 226, 170, 280); noise(532, 472, 226, 170, 120, '#000'); Q(700, 440, 60, 50, '#000'); noise(600, 400, 150, 85, 90);
Q(598, 535, 48, 48, '#f00'); comb(600, 510, 7, 7, 0, 3, 22, '#f00'); comb(652, 536, 7, 0, 7, 18, 3, '#f00');
area('M310 478H410L440 520 420 620 460 640H380L330 600 310 560 318 500z'); Q(330, 490, 70, 120, '#000'); noise(312, 490, 145, 150, 80); Q(360, 520, 20, 50, '#800000'); Q(412, 516, 34, 45, '#800000'); P('M410 514h36v48h-36z');
Q(455, 488, 74, 60, '#600000'); Q(484, 528, 50, 12, '#b00000'); Q(484, 570, 50, 12, '#b00000'); Q(484, 545, 50, 22, '#000'); P('M455 488H530V542H484M484 582H530');
area('M108 532H180L225 545V570L195 600 230 640 215 650 235 690V735L200 745 180 735H80V608H106z'); noise(110, 560, 110, 170, 120); Q(165, 600, 36, 26, '#f00');
Q(80, 610, 27, 30, '#b00000'); Q(80, 645, 27, 25, '#900000'); Q(80, 675, 27, 26, '#b00000'); Q(80, 705, 27, 28, '#b00000');
area('M235 670H300L330 690 375 730V760H460V790H370V830H290L255 810 240 740z'); noise(240, 672, 130, 150, 80); Q(300, 700, 70, 60, '#000'); noise(300, 700, 80, 110, 40);
Q(150, 785, 110, 40, '#600000'); area('M222 775H240V790L290 830H230L220 820z'); P('M280 820V886M310 810V884M345 845L430 840M345 860V886H280M450 640V570M480 600V750M495 590L550 640M505 640V720L530 740H620');
area('M590 650H660V690L635 710H600L590 690zM730 640L770 632H810V660L835 690 780 680 730 690zM715 700L770 690 760 760 715 770z'); noise(592, 652, 60, 50, 24); noise(720, 640, 100, 110, 50); noise(700, 520, 145, 90, 110); noise(700, 520, 145, 90, 160, '#000'); noise(450, 580, 60, 150, 45); noise(450, 580, 60, 130, 60, '#000'); noise(555, 640, 70, 100, 24);
area('M672 690L690 740V770H720V720H755V770H815V730L915 725 945 695H1015V815L995 832H965L960 800H675z');
area('M848 505H912V685H848z'); comb(850, 515, 12, 0, 14.500, 60, 4, '#c80000'); Q(850, 560, 60, 6, '#800');
P('M912 640V520L925 505H1050L1095 460');
area('M1096 452H1172V750L1160 760H1105L1096 745z'); Q(1100, 458, 64, 38, '#b00000'); Q(1100, 500, 68, 185, '#600000'); Q(1100, 685, 64, 40, '#b00000'); Q(1114, 490, 38, 40, '#000'); Q(1114, 652, 38, 38, '#000');
P('M1118 494h32v32h-32zM1118 656h32v32h-32z', '#679040'); T(1127, 519, '3', 22, '#679040'); T(1127, 681, '3', 22, '#679040');
o.push('<text transform="translate(1140 650) rotate(-90)" font-size="22" fill="#b00000" font-family="Liberation Sans" letter-spacing="0">MKFARK</text>');
area('M430 770H520V850H430L400 830V790z'); area('M332 478H395V512H332zM415 668H495V714H415z');
for (let i = 0; i < 10; i++) { const x = 685 + i * 33; P(`M${x} 730V792M${x} 805V830`, '#c80000'); P(`M${x} 768V800M${x - 14} 785h28`, '#679040'); T(x + 4, 784, 'G', 20, '#679040'); P(`M${x - 14} 817h28M${x} 804V830`, '#a05020'); Q(x, 808, 9, 10, '#f00'); }
for (let i = 0; i < 5; i++) { const x = 440 + i * 33; P(`M${x - 12} 802h28M${x} 785V815M${x} 785h14`, '#a05020'); P(`M${x - 12} 834h28M${x} 817V848M${x} 817h14`, i < 3 ? '#679040' : '#a05020'); Q(x + 2, 795, 10, 10, '#f00'); Q(x + 2, 828, 10, 10, '#f00'); }
P('M330 502h60M342 484v32M376 484v32M342 484h14M376 484h14', '#679040'); P('M415 502h65M432 486v30M464 486v30M104 683h34v32h-34zM285 866h60M300 850v32M330 850v32M470 668v50M490 668v50M460 686h36', '#a05020'); P('M104 631h33v33h-33zM412 684h50M412 704h50M430 668v46M445 668v46M460 668v46', '#679040');
T(583, 311, 'GND', 40, '#a00000'); T(307, 674, 'GND', 38, '#a00000'); T(1020, 836, 'GND', 80, '#a80000'); T(160, 338, 'GND', 22, '#a00000'); T(270, 455, 'GND', 28, '#a00000'); T(158, 806, 'ND', 22, '#a00000');
[[168, 142], [1094, 142], [249, 615], [1094, 806]].forEach(([x, y]) => { if (y < 200 && x > 1000) P('M1055 95H1130V190H1075L1045 160z', '#600000', 1, '#600000'); if (x < 300 && y > 500) P('M225 575H275L300 595V640L270 665H230L208 635V600z', '#f00', 3, '#600000'); o.push(`<circle cx="${x}" cy="${y}" r="32" fill="#b00000"/>`); P(`M${x} ${y - 16}v32M${x - 16} ${y}h32`, '#d33', 2); T(x - 24, y + 8, 'GND', 22, '#f0a0a0'); });
[[82, 285], [198, 285], [84, 393], [205, 393], [82, 495], [198, 495]].forEach(a => Q(a[0], a[1], 32, 15, '#a80000'));
o.push('<ellipse cx="154" cy="803" rx="11" ry="19" fill="#b00000"/><ellipse cx="231" cy="803" rx="11" ry="24" fill="#b00000"/><ellipse cx="199" cy="864" rx="20" ry="8" fill="#b00000" stroke="#f33" stroke-width="2"/>');
P('M45 889h15M52 882v15', '#ccc');
document.getElementById('pcb').innerHTML = o.join('');
```
